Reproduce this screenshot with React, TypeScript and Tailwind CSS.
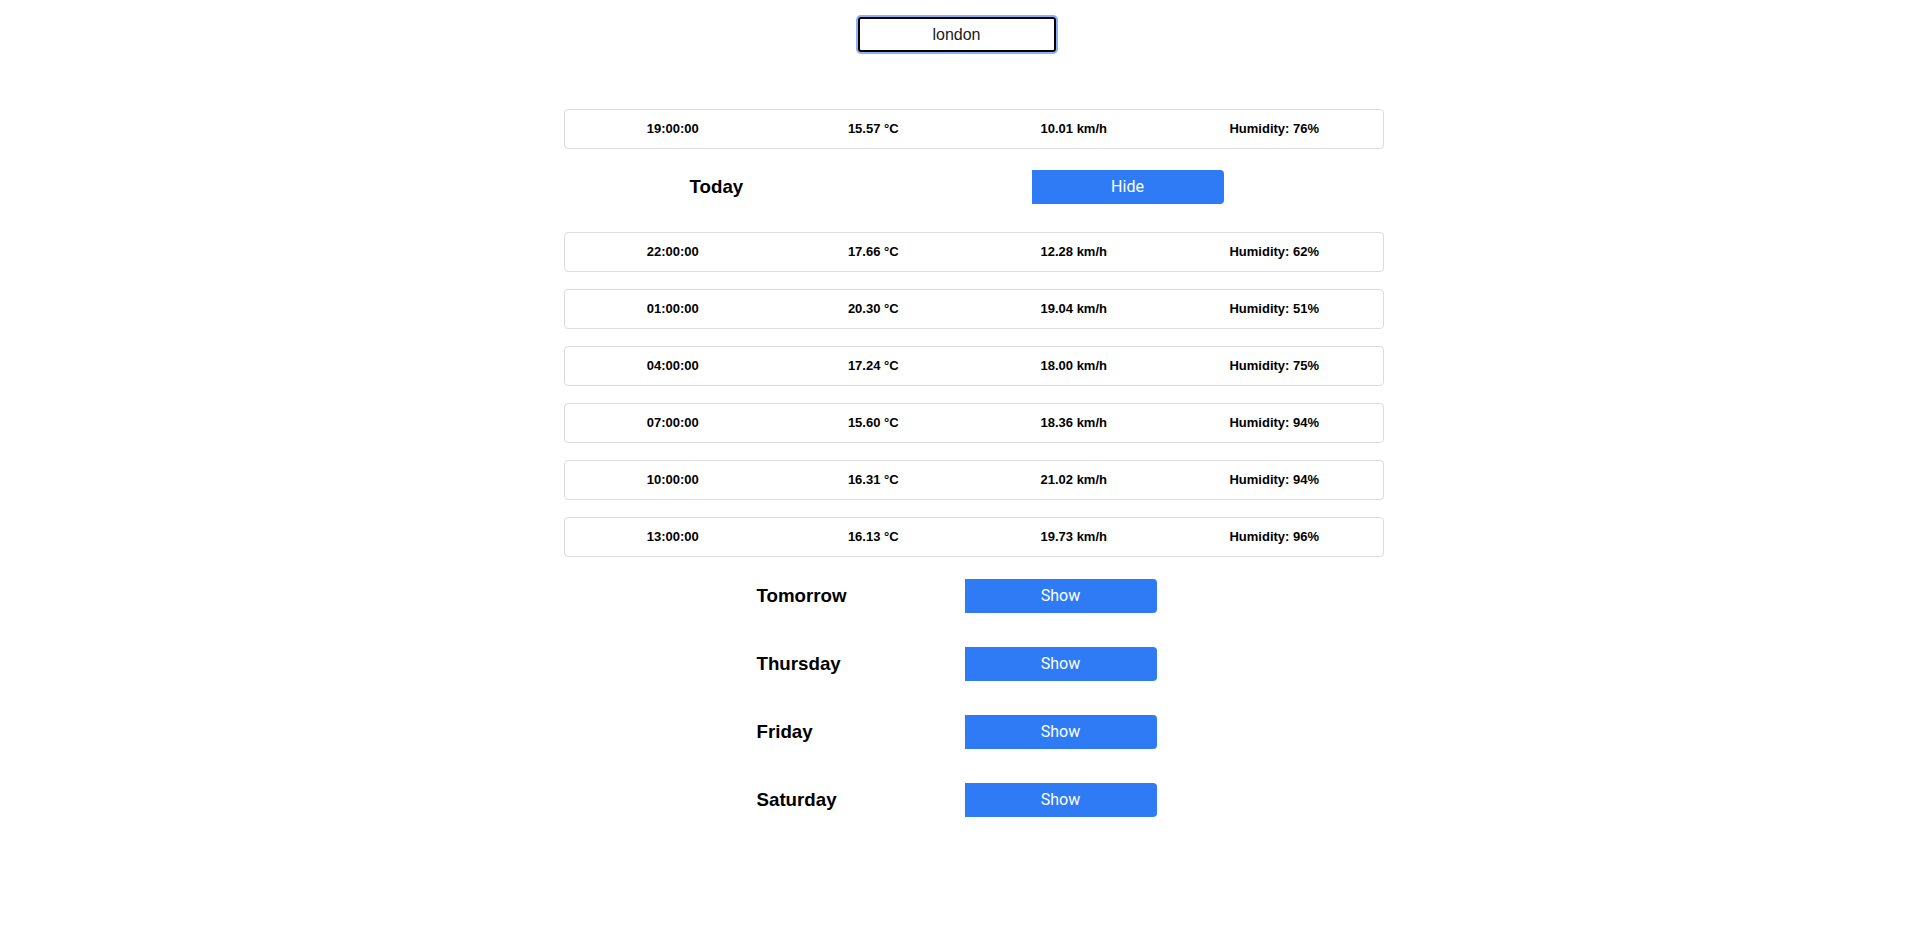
import React from "react";

type Row = { time: string; temp: string; wind: string; hum: string };

const first: Row = { time: "19:00:00", temp: "15.57 °C", wind: "10.01 km/h", hum: "Humidity: 76%" };

const today: Row[] = [
  { time: "22:00:00", temp: "17.66 °C", wind: "12.28 km/h", hum: "Humidity: 62%" },
  { time: "01:00:00", temp: "20.30 °C", wind: "19.04 km/h", hum: "Humidity: 51%" },
  { time: "04:00:00", temp: "17.24 °C", wind: "18.00 km/h", hum: "Humidity: 75%" },
  { time: "07:00:00", temp: "15.60 °C", wind: "18.36 km/h", hum: "Humidity: 94%" },
  { time: "10:00:00", temp: "16.31 °C", wind: "21.02 km/h", hum: "Humidity: 94%" },
  { time: "13:00:00", temp: "16.13 °C", wind: "19.73 km/h", hum: "Humidity: 96%" },
];

const days = ["Tomorrow", "Thursday", "Friday", "Saturday"];

function Card({ r }: { r: Row }) {
  return (
    <div className="h-[40px] w-[820px] border border-[#dcdcdc] rounded-[4px] px-[8px] grid grid-cols-4 items-center text-[13px] font-bold text-black">
      <div className="text-center">{r.time}</div>
      <div className="text-center">{r.temp}</div>
      <div className="text-center">{r.wind}</div>
      <div className="text-center">{r.hum}</div>
    </div>
  );
}

function Btn({ label }: { label: string }) {
  return (
    <button className="w-[192px] h-[34px] bg-[#2f7bf5] text-white rounded-r-[4px] text-[16px] font-['Roboto',sans-serif] font-normal">
      {label}
    </button>
  );
}

export default function App() {
  return (
    <div className="min-h-screen bg-white text-black font-['Liberation_Sans',Arial,sans-serif]">
      <div className="flex justify-center pt-[17px]">
        <input
          readOnly
          value="london"
          className="w-[198px] h-[35px] border-2 border-black rounded-[3px] text-center text-[16px] text-[#1a1a1a] pt-[1px] outline-none shadow-[0_0_0_2px_#8cb0f5] font-['Liberation_Sans',Arial,sans-serif]"
        />
      </div>

      <div className="w-[854px] mx-auto pl-[34px] mt-[57px]">
        <Card r={first} />
      </div>

      <div className="w-[534px] mx-auto mt-[21px] flex items-center justify-between">
        <h3 className="text-[18.72px] font-bold">Today</h3>
        <Btn label="Hide" />
      </div>

      <div className="w-[854px] mx-auto pl-[34px] mt-[28px] flex flex-col gap-[17px]">
        {today.map((r) => (
          <Card key={r.time} r={r} />
        ))}
      </div>

      <div className="w-[400px] mx-auto mt-[22px] flex flex-col gap-[34px]">
        {days.map((d) => (
          <div key={d} className="flex items-center justify-between h-[34px]">
            <h3 className="text-[18.72px] font-bold">{d}</h3>
            <Btn label="Show" />
          </div>
        ))}
      </div>
    </div>
  );
}
